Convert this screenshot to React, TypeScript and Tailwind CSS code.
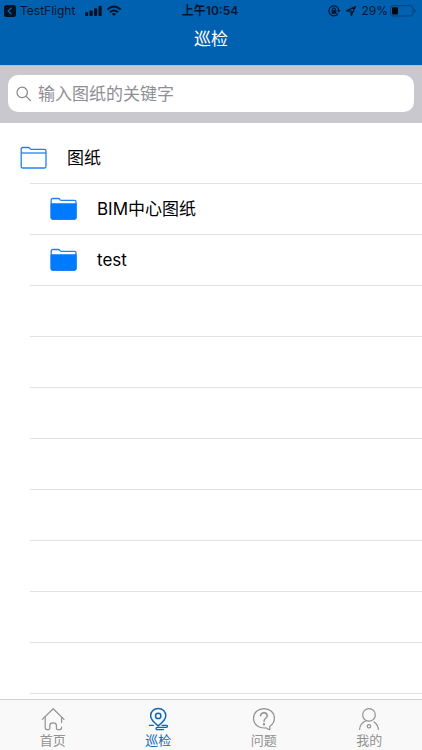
import { useState } from "react";
import type { ReactNode } from "react";

const folders = [
  { name: "图纸", level: 0, open: true },
  { name: "BIM中心图纸", level: 1, open: false },
  { name: "test", level: 1, open: false },
];

// blank separators below the list, like a plain iOS table view
const emptyRows = [0, 1, 2, 3, 4, 5, 6, 7];

function FolderIcon({ open }: { open: boolean }) {
  return (
    <svg width="28" height="24" viewBox="0 0 28 24" fill="none" stroke="#2380ee" strokeWidth="1.3" strokeLinejoin="round">
      <path d="M1.2 20.5V3Q1.2 1.5 2.7 1.5H8.2Q9.4 1.5 9.8 2.4Q10.1 3.3 11.2 3.3H24.5Q26 3.3 26 4.8V20.5Q26 22 24.5 22H2.7Q1.2 22 1.2 20.5Z" />
      {open ? (
        <path d="M1.2 7H26" />
      ) : (
        <path d="M1.2 7H26V20.5Q26 22 24.5 22H2.7Q1.2 22 1.2 20.5Z" fill="#007aff" stroke="#007aff" />
      )}
    </svg>
  );
}

function TabIcon({ children }: { children: ReactNode }) {
  return (
    <svg
      width="24"
      height="24"
      viewBox="0 0 24 24"
      fill="none"
      stroke="currentColor"
      strokeWidth="1.2"
      strokeLinecap="round"
      strokeLinejoin="round"
    >
      {children}
    </svg>
  );
}

const tabs = [
  {
    label: "首页",
    icon: (
      <TabIcon>
        <path d="M1.3 12.4L12.2 1.7L23 12.4" />
        <path d="M4.2 10V20.6Q4.2 22.6 6 22.6H7.4Q8.8 22.6 8.8 21.2V18.4Q8.8 15.8 12.1 15.8Q15.4 15.8 15.4 18.4V21.2Q15.4 22.6 16.8 22.6H18.6Q20.6 22.6 20.6 20.6V20M20.6 10.2V15.6" />
      </TabIcon>
    ),
  },
  {
    label: "巡检",
    icon: (
      <TabIcon>
        <path d="M12.2 18.9C9 16.4 4.6 12.9 4.6 8.8A7.6 7.4 0 0 1 19.8 8.8C19.8 12.9 15.4 16.4 12.2 18.9Z" strokeWidth="1.5" />
        <circle cx="12.2" cy="8.9" r="2.7" strokeWidth="1.5" />
        <path d="M3.4 18.3H7.4M16 18.3H20.3Q21.6 18.3 21.6 19.3Q21.6 20.3 20.3 20.3H11.4Q10 20.3 10 21.4Q10 22.6 11.4 22.6H17.5" strokeWidth="1.3" />
      </TabIcon>
    ),
  },
  {
    label: "问题",
    icon: (
      <TabIcon>
        <path d="M17.8 19.2V22.7Q15.4 22.2 14 20.9C7 21.7 1.5 17.5 1.5 11.2C1.5 5.6 6.2 1.6 12 1.6S22.4 5.6 22.4 11.2Q22.4 16.2 17.8 19.2Z" />
        <path d="M8.6 8.8Q8.8 5.7 12.1 5.7Q15.3 5.9 15.3 8.7Q15.3 10.2 13.4 11.5Q12 12.5 12 14.6" strokeWidth="1.4" />
        <circle cx="12" cy="17.2" r="0.6" fill="currentColor" />
      </TabIcon>
    ),
  },
  {
    label: "我的",
    icon: (
      <TabIcon>
        <circle cx="12" cy="7.9" r="6.3" />
        <path d="M9.2 13.8Q3.2 15.8 2.6 22.4M17 14.9Q20.8 17.3 21.4 22.4" />
        <circle cx="12" cy="19.3" r="1.7" />
      </TabIcon>
    ),
  },
];

function StatusBar() {
  return (
    <div className="grid grid-cols-3 items-center h-[22px] pl-1 pr-1.5 text-xs text-[#03162f]">
      <div className="flex items-center">
        <svg width="12" height="12" viewBox="0 0 12 12">
          <rect width="12" height="12" rx="2.5" fill="#02101f" />
          <path d="M7.5 2.8L4.2 6L7.5 9.2" fill="none" stroke="#0061b1" strokeWidth="1.4" />
        </svg>
        <span className="ml-1">TestFlight</span>
        <svg className="ml-2.5" width="17" height="12" viewBox="0 0 17 12" fill="#02101f">
          <rect x="0" y="7.3" width="3.2" height="3.7" rx="0.8" />
          <rect x="4.5" y="5.5" width="3.2" height="5.5" rx="0.8" />
          <rect x="9" y="3.2" width="3.2" height="7.8" rx="0.8" />
          <rect x="13.5" y="0.8" width="3.2" height="10.2" rx="0.8" />
        </svg>
        <svg className="ml-1" width="16" height="12" viewBox="0 0 16 12" fill="none" stroke="#02101f" strokeWidth="2">
          <path d="M1.4 4.6Q8-1.5 14.6 4.6" />
          <path d="M4 7.3Q8 3.8 12 7.3" />
          <path d="M5.9 8.7Q8 7.2 10.1 8.7L8 11Z" fill="#02101f" stroke="none" />
        </svg>
      </div>
      <span className="text-center font-semibold">上午10:54</span>
      <div className="flex items-center justify-end">
        <svg width="13" height="12" viewBox="0 0 13 12" fill="none" stroke="currentColor" strokeWidth="1.1">
          <path d="M9.3 2.2A5 5 0 1 0 10.2 8.5" />
          <path d="M9.3 2.2Q10.7 3.5 10.8 5.4" />
          <path d="M8.9 5H12.6L10.8 7.6Z" fill="currentColor" stroke="none" />
          <rect x="3.6" y="5.2" width="4.8" height="3.6" fill="currentColor" stroke="none" />
          <path d="M4.6 5.2V4.3Q4.6 3 6 3Q7.4 3 7.4 4.3V5.2" />
        </svg>
        <svg className="ml-1" width="12" height="12" viewBox="0 0 12 12" fill="none" stroke="currentColor" strokeWidth="1.4" strokeLinejoin="round">
          <path d="M10.4 1.6L1.6 5.8L6 6.1L6.3 10.4Z" />
        </svg>
        <span className="ml-1">29%</span>
        <svg className="ml-0.5" width="26" height="12" viewBox="0 0 26 12">
          <rect x="0.5" y="0.7" width="22.5" height="10.3" rx="2.6" fill="none" stroke="#064078" strokeWidth="1" />
          <rect x="2" y="2.3" width="6" height="7.2" rx="1" fill="#02070f" />
          <path d="M24.2 4Q25.6 4.6 25.6 5.9Q25.6 7.2 24.2 7.8Z" fill="#064078" />
        </svg>
      </div>
    </div>
  );
}

export default function App() {
  const [activeTab, setActiveTab] = useState("巡检");
  const [keyword, setKeyword] = useState("");

  return (
    <div className="flex flex-col h-screen overflow-hidden bg-white font-[Inter,'Noto_Sans_CJK_SC',sans-serif]">
      <header className="h-[65px] shrink-0 bg-[#0061b1]">
        <StatusBar />
        <h1 className="pt-[3px] text-center text-[17px] leading-7 text-white">巡检</h1>
      </header>

      <div className="shrink-0 border-t border-[#b9bcc8] bg-[#c9c8cf] px-2 pt-[9px] pb-[11px]">
        <label className="flex items-center h-[37px] rounded-[10px] bg-white px-2">
          <svg width="16" height="16" viewBox="0 0 16 16" fill="none" stroke="#85858b" strokeWidth="1.2" strokeLinecap="round">
            <circle cx="6.2" cy="6.4" r="5.2" />
            <path d="M10.2 10.4L14.4 14.6" />
          </svg>
          <input
            type="text"
            value={keyword}
            onChange={(e) => setKeyword(e.target.value)}
            aria-label="输入图纸的关键字"
            placeholder="输入图纸的关键字"
            className="ml-1.5 min-w-0 flex-1 pt-0.5 text-[#333333] text-[17px] outline-none placeholder:text-[#8e8e93]"
          />
        </label>
      </div>

      <main className="flex-1 min-h-0 overflow-hidden pt-[10px]">
        <ul>
          {folders.map((folder) => (
            <li key={folder.name}>
              <button
                className={`flex items-center w-full h-[50px] text-left text-[17px] text-black ${
                  folder.level === 0 ? "pl-5" : "pl-[50px]"
                }`}
              >
                <FolderIcon open={folder.open} />
                <span className="ml-[19px] pt-0.5">{folder.name}</span>
              </button>
              <div className="ml-[30px] h-px bg-[#e2e2e4]" />
            </li>
          ))}
        </ul>
        {emptyRows.map((row) => (
          <div key={row} className="ml-[30px] h-[51px] border-b border-[#e2e2e4]" />
        ))}
      </main>

      <nav className="grid grid-cols-4 h-[51px] shrink-0 border-t border-[#d3d3d5] bg-[#f9f9f9]">
        {tabs.map((tab) => (
          <button
            key={tab.label}
            onClick={() => setActiveTab(tab.label)}
            className={`flex flex-col items-center pt-[7px] text-[13px] leading-[18px] ${
              activeTab === tab.label ? "text-[#0f66b5]" : "text-[#929292]"
            }`}
          >
            {tab.icon}
            <span>{tab.label}</span>
          </button>
        ))}
      </nav>
    </div>
  );
}
